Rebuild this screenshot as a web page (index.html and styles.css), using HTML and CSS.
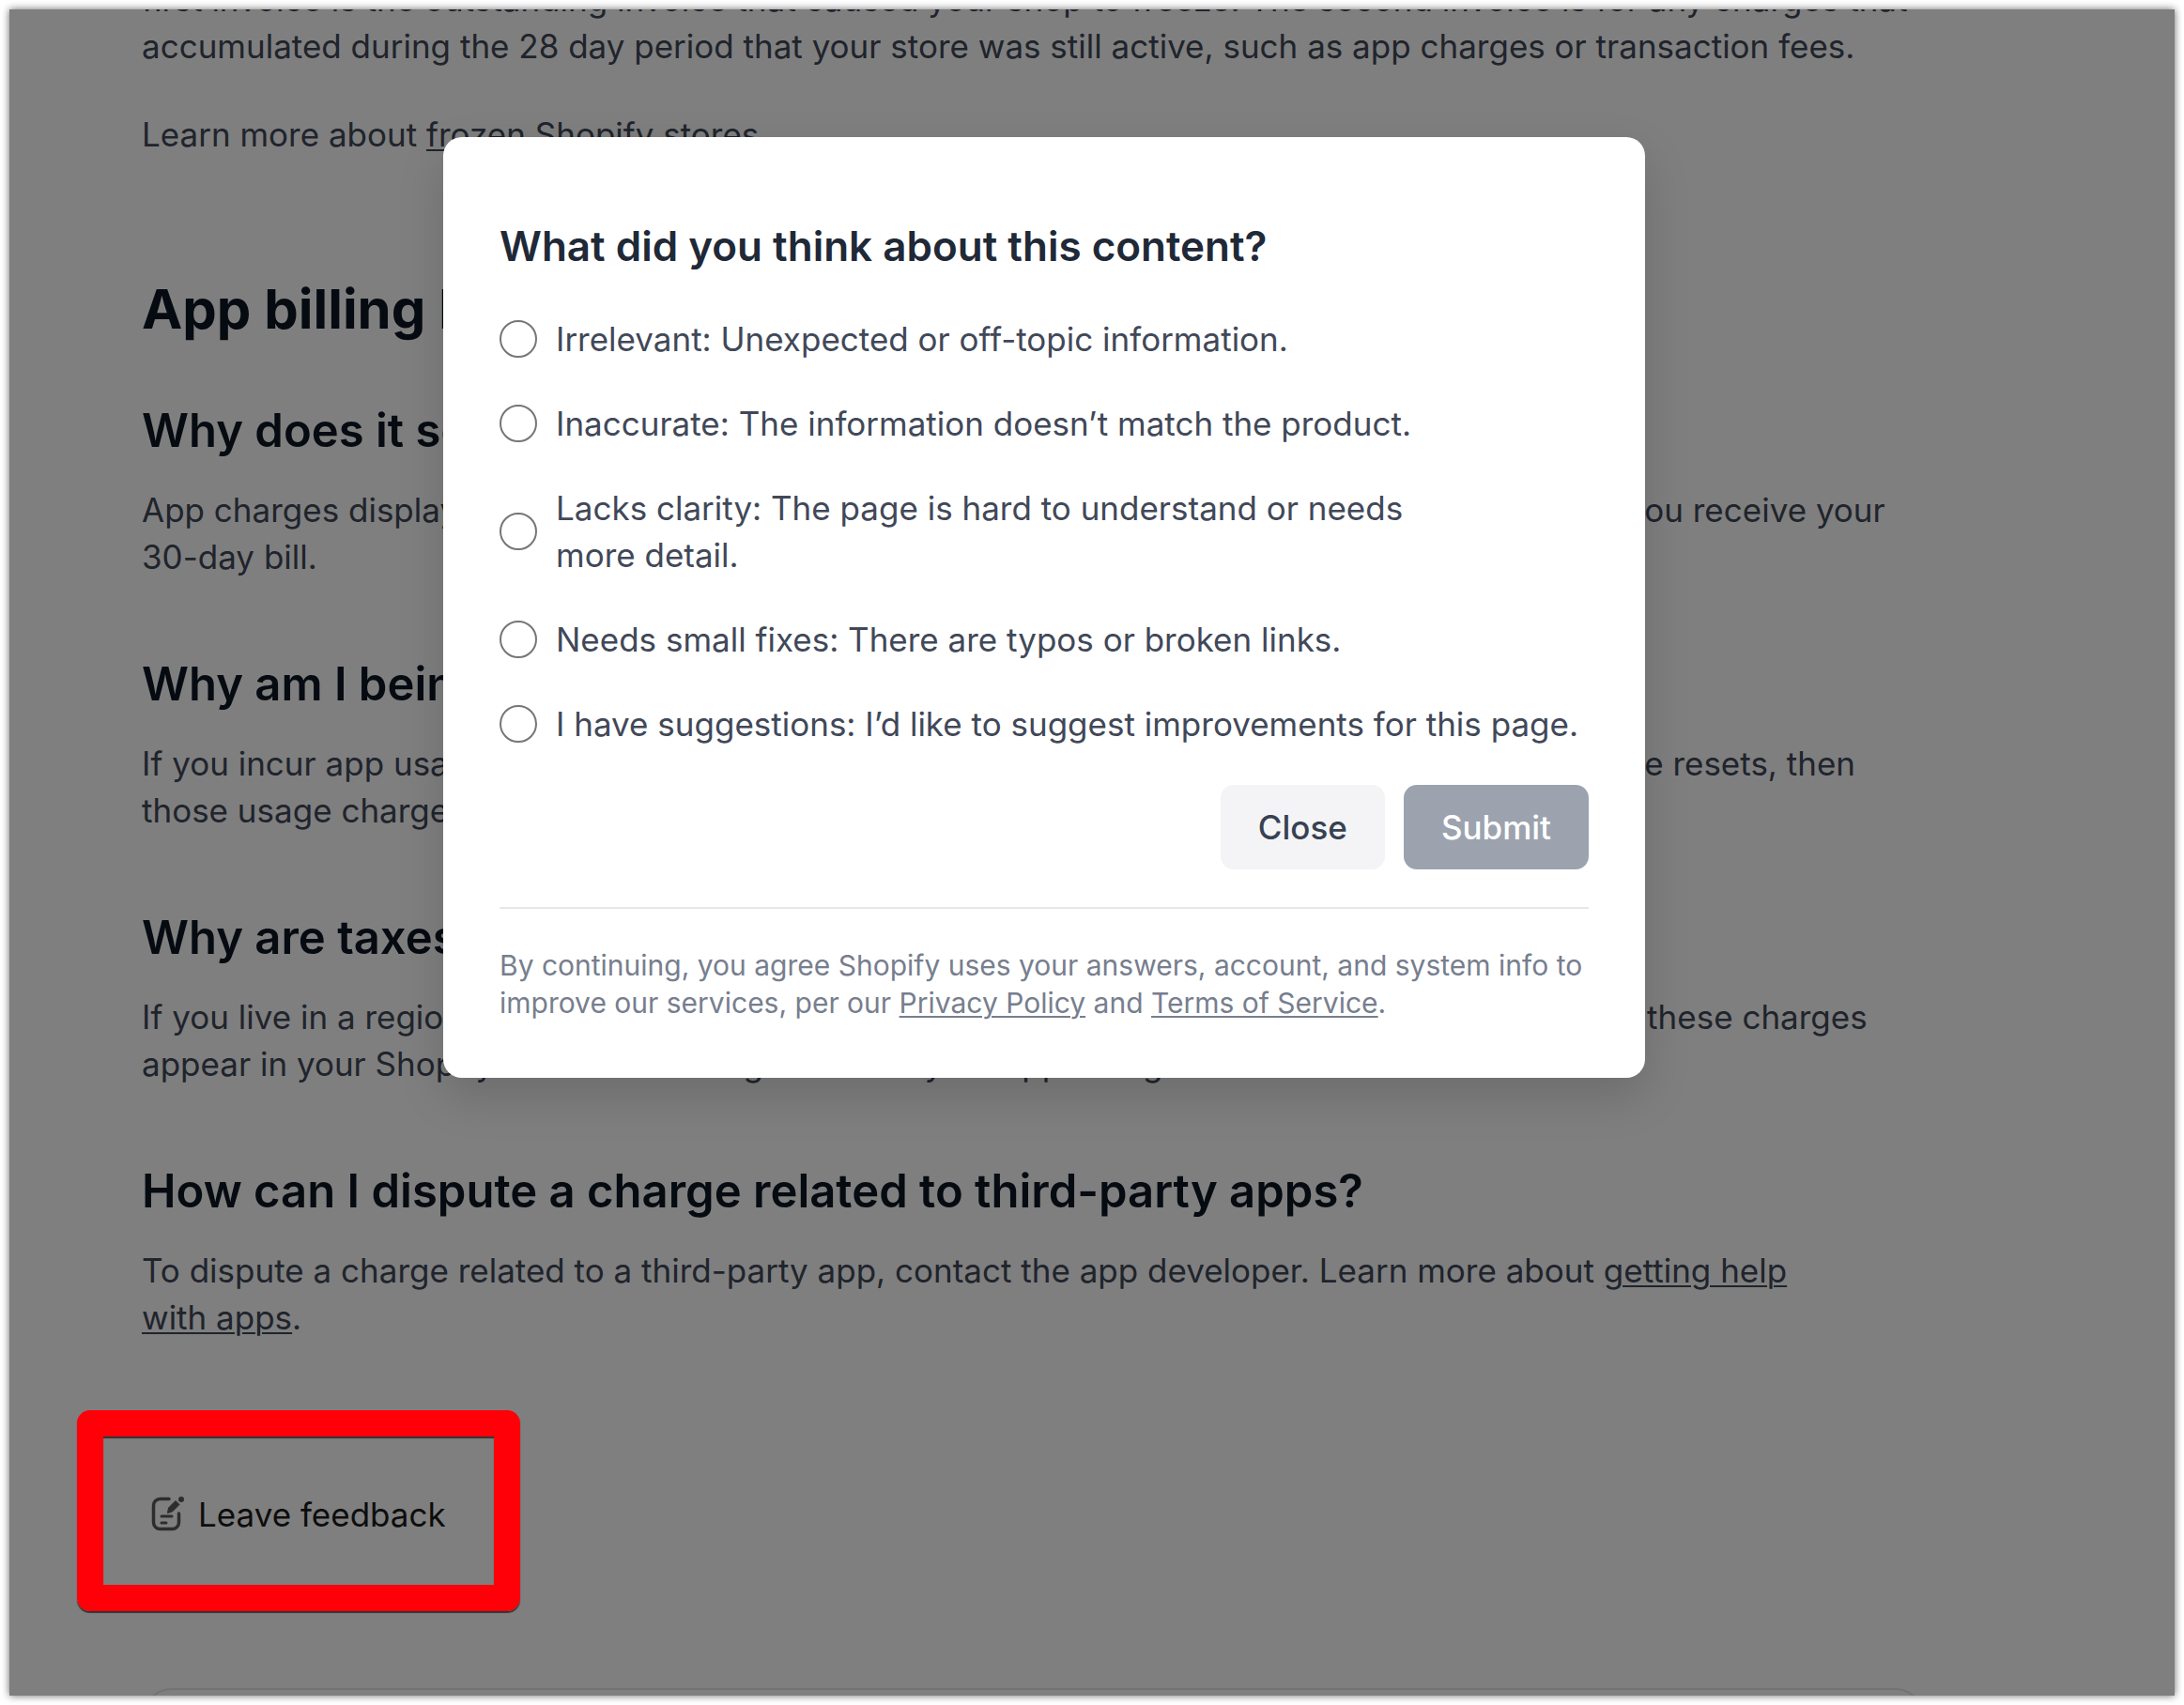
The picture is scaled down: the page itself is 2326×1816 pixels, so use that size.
FILE: index.html
```html
<!DOCTYPE html>
<html lang="en">
<head>
    <meta charset="UTF-8">
    <meta name="viewport" content="width=device-width, initial-scale=1.0">
    <title>App billing - Shopify Help Center</title>
    <link rel="stylesheet" href="styles.css">
</head>
<body>
    <div class="window">
        <!-- Help article -->
        <main class="article">
            <p>first invoice is the outstanding invoice that caused your shop to freeze. The second invoice is for any charges that accumulated during the 28 day period that your store was still active, such as app charges or transaction fees.</p>
            <p>Learn more about <a href="#">frozen Shopify stores</a>.</p>

            <h2>App billing FAQ</h2>

            <h3>Why does it seem like I was charged twice?</h3>
            <p>App charges displayed on your Shopify admin might be recurring charges that are billed before you receive your 30-day bill.</p>

            <h3>Why am I being charged for usage?</h3>
            <p>If you incur app usage charges after your bill is created for the month and before your billing cycle resets, then those usage charges are added to your next bill.</p>

            <h3>Why are taxes added to my app charges?</h3>
            <p>If you live in a region where taxes apply, then you might be charged tax for apps and orders, and these charges appear in your Shopify admin in a billing details of your app billing.</p>

            <h3>How can I dispute a charge related to third-party apps?</h3>
            <p>To dispute a charge related to a third-party app, contact the app developer. Learn more about <a href="#">getting help with&nbsp;apps</a>.</p>

            <div class="feedback">
                <button type="button" class="feedback-button">
                    <svg class="feedback-icon" viewBox="0 0 36 40" aria-hidden="true">
                        <path d="M19 3.5H9.500a7 7 0 0 0-7 7v18a7 7 0 0 0 7 7h13a7 7 0 0 0 7-7V19" fill="none" stroke="currentColor" stroke-width="3.5" stroke-linecap="round"/>
                        <path d="M11 22h11M11 29h5" fill="none" stroke="currentColor" stroke-width="3" stroke-linecap="round"/>
                        <path d="M26 5.5l4 4-7.5 7.5-5 1.5 1-5.5z" fill="currentColor" stroke="currentColor" stroke-width="1" stroke-linejoin="round"/>
                        <circle cx="32" cy="4" r="3" fill="currentColor"/>
                    </svg>
                    Leave feedback
                </button>
            </div>

            <div class="card"></div>
        </main>

        <!-- Feedback dialog -->
        <div class="overlay">
            <form class="modal" role="dialog" aria-labelledby="modalTitle">
                <h2 class="modal-title" id="modalTitle">What did you think about this content?</h2>
                <div class="options">
                    <label class="option">
                        <input type="radio" name="reason" value="irrelevant">
                        <span>Irrelevant: Unexpected or off-topic information.</span>
                    </label>
                    <label class="option">
                        <input type="radio" name="reason" value="inaccurate">
                        <span>Inaccurate: The information doesn’t match the product.</span>
                    </label>
                    <label class="option">
                        <input type="radio" name="reason" value="clarity">
                        <span>Lacks clarity: The page is hard to understand or needs<br>more detail.</span>
                    </label>
                    <label class="option">
                        <input type="radio" name="reason" value="fixes">
                        <span>Needs small fixes: There are typos or broken links.</span>
                    </label>
                    <label class="option">
                        <input type="radio" name="reason" value="suggestions">
                        <span>I have suggestions: I’d like to suggest improvements for this page.</span>
                    </label>
                </div>
                <div class="button-group">
                    <button type="button" class="close">Close</button>
                    <button type="submit" class="submit" disabled>Submit</button>
                </div>
                <p class="legal">By continuing, you agree Shopify uses your answers, account, and system info to improve our services, per our <a href="#">Privacy Policy</a> and <a href="#">Terms of Service</a>.</p>
            </form>
        </div>
    </div>
</body>
</html>
```
FILE: styles.css
```css
*,
*::after {
    box-sizing: border-box;
}

body {
    margin: 0;
    padding: 10px;
    height: 100vh;
    background: #fff;
    color: #414858;
    font-family: Inter, "Liberation Sans", sans-serif;
    font-size: 35px;
    line-height: 50px;
}

a {
    color: inherit;
    text-decoration: underline;
    text-decoration-thickness: 2px;
    text-underline-offset: 3px;
}

button {
    font: inherit;
    border: none;
    cursor: pointer;
}

.window {
    position: relative;
    height: 100%;
    overflow: hidden;
    box-shadow: 0 0 8px rgba(0, 0, 0, 0.6);
}

/* scrolled part of the way down */
.article {
    margin-top: -36px;
    padding: 0 266px 0 141px;
}

.article p {
    margin: 0 0 44px;
}

.article h2 {
    margin: 125px 0 64px;
    font-size: 58px;
    line-height: 72px;
    font-weight: 700;
    color: #0c1724;
}

.article h3 {
    margin: 81px 0 29px;
    font-size: 49px;
    line-height: 60px;
    font-weight: 600;
    color: #0c1724;
}

.article h2 + h3 {
    margin-top: 0;
}

.feedback {
    margin-top: 160px;
}

.feedback-button {
    position: relative;
    display: inline-flex;
    align-items: center;
    gap: 14px;
    padding: 0 10px;
    background: none;
    color: #1a1a1a;
}

/* red highlight, drawn over the dimmed page */
.feedback-button::after {
    content: "";
    position: absolute;
    z-index: 2;
    top: -86px;
    left: -69px;
    width: 472px;
    height: 214px;
    border: 28px solid #ff0009;
    border-radius: 14px;
    box-shadow: 0 2px 1px rgba(0, 0, 0, 0.6), inset 0 2px 1px rgba(0, 0, 0, 0.6);
}

.feedback-icon {
    width: 36px;
    height: 40px;
    color: #5a5a5a;
}

.card {
    margin-top: 153px;
    height: 200px;
    border: 2px solid #e5e7eb;
    border-radius: 32px;
}

.overlay {
    position: absolute;
    z-index: 1;
    inset: 0;
    display: flex;
    justify-content: center;
    align-items: flex-start;
    padding: 136px 102px 0 0;
    background: rgba(0, 0, 0, 0.5);
}

.modal {
    width: 1280px;
    padding: 86px 60px 60px;
    background: #fff;
    border-radius: 20px;
    box-shadow: 0 20px 50px rgba(0, 0, 0, 0.15);
}

.modal-title {
    margin: 0 0 44px;
    font-size: 44px;
    line-height: 60px;
    font-weight: 600;
    color: #1f2937;
}

.options {
    display: flex;
    flex-direction: column;
    gap: 40px;
}

.option {
    display: flex;
    align-items: center;
    gap: 20px;
}

.option input {
    appearance: none;
    flex: none;
    width: 40px;
    height: 40px;
    margin: 0;
    border: 2px solid #767676;
    border-radius: 50%;
    background: #fff;
}

.button-group {
    display: flex;
    justify-content: flex-end;
    gap: 20px;
    margin-top: 40px;
}

.button-group button {
    padding: 20px 40px;
    border-radius: 14px;
    font-weight: 500;
}

.close {
    background: #f4f4f6;
    color: #374151;
}

.submit {
    background: #9ca3af;
    color: #fff;
}

.legal {
    margin: 40px 0 0;
    padding-top: 40px;
    border-top: 2px solid #e5e7eb;
    font-size: 30px;
    line-height: 40px;
    color: #777e8e;
}
```
